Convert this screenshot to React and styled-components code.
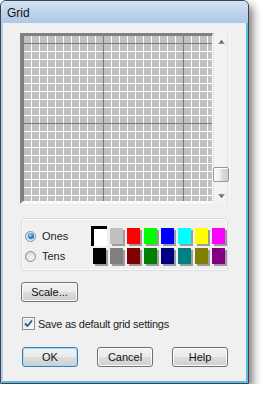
import React from "react";
import styled, { createGlobalStyle } from "styled-components";

const GlobalStyle = createGlobalStyle`
  html, body {
    margin: 0;
    padding: 0;
    background: #ffffff;
  }
  body {
    font-family: "Liberation Sans", Arial, sans-serif;
    font-size: 11px;
    color: #1e1e1e;
  }
  * {
    box-sizing: border-box;
  }
`;

const topColors = ["#ffffff", "#c0c0c0", "#ff0000", "#00ff00", "#0000ff", "#00ffff", "#ffff00", "#ff00ff"];
const bottomColors = ["#000000", "#808080", "#800000", "#008000", "#000080", "#008080", "#808000", "#800080"];

const Window = styled.div`
  width: 249px;
  height: 384px;
  display: flex;
  flex-direction: column;
  border: 1px solid #3c4450;
  border-radius: 6px 6px 1px 1px;
  background: #b9d1ea;
  box-shadow: 4px 5px 9px rgba(0, 0, 0, 0.5);
  overflow: hidden;
`;

const TitleBar = styled.div`
  height: 22px;
  display: flex;
  align-items: center;
  padding: 2px 0 0 6px;
  background: linear-gradient(#d3e2f4, #bcd2ec 60%, #afc8e7);
`;

const Title = styled.span`
  font-size: 12px;
  color: #111;
`;

const Body = styled.div`
  flex: 1;
  display: flex;
  flex-direction: column;
  align-items: flex-start;
  padding: 10px 0 0 17px;
  background: #f0f0f0;
  border-left: 2px solid #b3cce8;
  border-right: 2px solid #5fb8e6;
  border-bottom: 2px solid #5fb8e6;
`;

const GridRow = styled.div`
  display: flex;
  width: 210px;
  height: 171px;
`;

const Canvas = styled.div`
  width: 193px;
  height: 100%;
  border-style: solid;
  border-width: 3px 1px 3px 3px;
  border-color: #808080 #f8f8f8 #fafafa #808080;
  background-color: #c0c0c0;
  background-image:
    linear-gradient(to right, #7c7c7c 1px, transparent 1px),
    linear-gradient(to bottom, #7c7c7c 1px, transparent 1px),
    linear-gradient(to right, #ffffff 1px, transparent 1px),
    linear-gradient(to bottom, #ffffff 1px, transparent 1px);
  background-size: 80px 80px, 80px 80px, 8px 8px, 8px 8px;
  background-position: 0 0, 0 7px, 0 0, 0 7px;
`;

const ScrollBar = styled.div`
  width: 17px;
  display: flex;
  flex-direction: column;
  background: linear-gradient(to right, #e4e4e4, #f4f4f4 2px, #f2f2f2 13px, #e6e6e6 15px, #f7f7f7 16px);
`;

const ArrowButton = styled.div`
  height: 17px;
  display: flex;
  align-items: center;
  justify-content: center;
`;

const Track = styled.div`
  flex: 1;
  display: flex;
  flex-direction: column;
`;

const Thumb = styled.div`
  height: 15px;
  margin: auto 1px 5px 0;
  border: 1px solid #979797;
  border-radius: 2px;
  background: linear-gradient(to right, #fbfbfb, #eeeeee 45%, #dadada 60%, #cdcdcd);
  box-shadow: inset 1px 1px 0 #ffffff;
`;

const Panel = styled.div`
  display: flex;
  width: 207px;
  height: 53px;
  margin: 14px 0 0 1px;
  padding: 7px 0 0 3px;
  border: 1px solid #d5dfe5;
  border-radius: 3px;
  box-shadow: inset 0 0 0 1px #fbfbfb;
`;

const RadioColumn = styled.div`
  width: 66px;
  display: flex;
  flex-direction: column;
`;

const OptionRow = styled.label`
  height: 20px;
  display: flex;
  align-items: center;
  gap: 6px;
`;

const Radio = styled.span`
  position: relative;
  width: 11px;
  height: 11px;
  border-radius: 50%;
  border: 1px solid #8a8b8c;
  background: radial-gradient(circle at 60% 65%, #f8f8f8, #dcdcdc 70%, #cfcfcf);

  &::after {
    content: "";
    display: ${(p) => (p.$checked ? "block" : "none")};
    position: absolute;
    left: 1.5px;
    top: 1.5px;
    width: 6px;
    height: 6px;
    border-radius: 50%;
    background: radial-gradient(circle at 40% 35%, #9ed6f6, #2c78bc 55%, #154a86);
    box-shadow: 0 0 0 1px #b8dcf2;
  }
`;

const Swatches = styled.div`
  display: grid;
  grid-template-columns: repeat(8, 17px);
  grid-auto-rows: 20px;
`;

const Swatch = styled.div`
  width: 13px;
  height: 16px;
  margin: 2px 0 0 2px;
  background: ${(p) => p.$color};
  box-shadow: 2px 2px 0 #9c9c9c;

  ${(p) =>
    p.$selected &&
    `
    width: 16px;
    height: 20px;
    margin: 0;
    border-top: 3px solid #000;
    border-left: 3px solid #000;
    box-shadow: none;
  `}
`;

const Button = styled.div`
  width: ${(p) => p.$w || 56}px;
  height: 20px;
  display: flex;
  align-items: center;
  justify-content: center;
  border: 1px solid ${(p) => (p.$default ? "#3c7fb1" : "#707070")};
  border-radius: 3px;
  background: linear-gradient(#f2f2f2, #ebebeb 48%, #dddddd 52%, #cfcfcf);
  box-shadow: inset 0 0 0 1px ${(p) => (p.$default ? "#a6dcf6" : "#fcfcfc")};
  color: #111;
`;

const ScaleButton = styled(Button)`
  margin: 11px 0 0 1px;
`;

const CheckRow = styled.label`
  display: flex;
  align-items: center;
  gap: 3px;
  height: 13px;
  margin: 15px 0 0 2px;
  letter-spacing: -0.25px;
`;

const CheckBox = styled.span`
  width: 13px;
  height: 13px;
  display: flex;
  align-items: center;
  justify-content: center;
  border: 1px solid #8e8f8f;
  background: linear-gradient(135deg, #dadada, #f6f6f6 70%, #ffffff);
  box-shadow: inset 0 0 0 1px #f4f4f4;
`;

const ButtonRow = styled.div`
  display: flex;
  gap: 19px;
  margin: 17px 0 0 2px;
`;

function Arrow({ up }) {
  return (
    <svg width="7" height="4" viewBox="0 0 7 4">
      <defs>
        <linearGradient id={up ? "ag-up" : "ag-down"} x1="0" y1="0" x2="0" y2="1">
          <stop offset="0" stopColor={up ? "#3a3a3a" : "#9a9a9a"} />
          <stop offset="1" stopColor={up ? "#9a9a9a" : "#3a3a3a"} />
        </linearGradient>
      </defs>
      <polygon
        points={up ? "3.5,0 7,4 0,4" : "0,0 7,0 3.5,4"}
        fill={`url(#${up ? "ag-up" : "ag-down"})`}
      />
    </svg>
  );
}

export default function App() {
  return (
    <>
      <GlobalStyle />
      <Window>
        <TitleBar>
          <Title>Grid</Title>
        </TitleBar>
        <Body>
          <GridRow>
            <Canvas />
            <ScrollBar>
              <ArrowButton>
                <Arrow up />
              </ArrowButton>
              <Track>
                <Thumb />
              </Track>
              <ArrowButton>
                <Arrow />
              </ArrowButton>
            </ScrollBar>
          </GridRow>

          <Panel>
            <RadioColumn>
              <OptionRow>
                <Radio $checked />
                <span>Ones</span>
              </OptionRow>
              <OptionRow>
                <Radio />
                <span>Tens</span>
              </OptionRow>
            </RadioColumn>
            <Swatches>
              {topColors.map((c, i) => (
                <Swatch key={"t" + i} $color={c} $selected={i === 0} />
              ))}
              {bottomColors.map((c, i) => (
                <Swatch key={"b" + i} $color={c} />
              ))}
            </Swatches>
          </Panel>

          <ScaleButton $w={57}>Scale...</ScaleButton>

          <CheckRow>
            <CheckBox>
              <svg width="9" height="9" viewBox="0 0 9 9">
                <path d="M1 4.5 L3.5 7 L8 1.5" fill="none" stroke="#33508e" strokeWidth="1.8" />
              </svg>
            </CheckBox>
            <span>Save as default grid settings</span>
          </CheckRow>

          <ButtonRow>
            <Button $default>OK</Button>
            <Button>Cancel</Button>
            <Button>Help</Button>
          </ButtonRow>
        </Body>
      </Window>
    </>
  );
}
